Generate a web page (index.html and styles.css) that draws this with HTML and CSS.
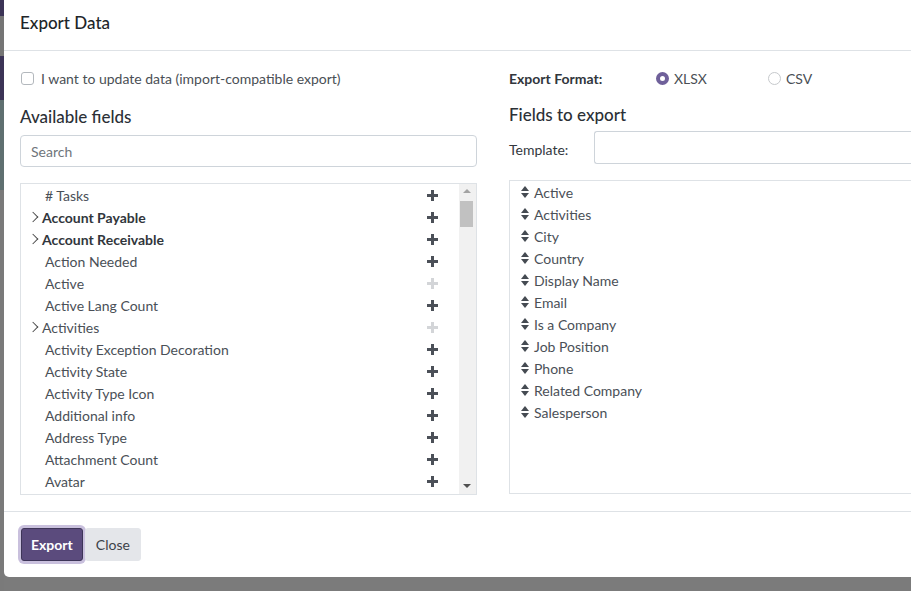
FILE: index.html
```html
<!DOCTYPE html>
<html>
<head>
<meta charset="utf-8">
<link rel="stylesheet" href="styles.css">
</head>
<body>
<div class="backdrop"></div>
<div class="dialog">
  <header class="dlg-header"><h4>Export Data</h4></header>
  <div class="dlg-body">
    <section class="col-left">
      <label class="check-row"><span class="checkbox"></span>I want to update data (import-compatible export)</label>
      <h5 class="col-title">Available fields</h5>
      <div class="search"><span>Search</span></div>
      <div class="field-box">
        <ul class="field-list">
          <li><span class="name">#&nbsp;Tasks</span><span class="plus"></span></li>
          <li class="parent bold"><span class="caret"></span><span class="name">Account Payable</span><span class="plus"></span></li>
          <li class="parent bold"><span class="caret"></span><span class="name">Account Receivable</span><span class="plus"></span></li>
          <li><span class="name">Action Needed</span><span class="plus"></span></li>
          <li><span class="name">Active</span><span class="plus off"></span></li>
          <li><span class="name">Active Lang Count</span><span class="plus"></span></li>
          <li class="parent"><span class="caret"></span><span class="name">Activities</span><span class="plus off"></span></li>
          <li><span class="name">Activity Exception Decoration</span><span class="plus"></span></li>
          <li><span class="name">Activity State</span><span class="plus"></span></li>
          <li><span class="name">Activity Type Icon</span><span class="plus"></span></li>
          <li><span class="name">Additional info</span><span class="plus"></span></li>
          <li><span class="name">Address Type</span><span class="plus"></span></li>
          <li><span class="name">Attachment Count</span><span class="plus"></span></li>
          <li><span class="name">Avatar</span><span class="plus"></span></li>
        </ul>
        <div class="scrollbar">
          <span class="arrow up"></span>
          <span class="thumb"></span>
          <span class="arrow down"></span>
        </div>
      </div>
    </section>
    <section class="col-right">
      <div class="format-row">
        <span class="format-label">Export Format:</span>
        <label class="radio-opt"><span class="radio on"></span>XLSX</label>
        <label class="radio-opt"><span class="radio"></span>CSV</label>
      </div>
      <h5 class="col-title right-title">Fields to export</h5>
      <div class="template-row">
        <span class="template-label">Template:</span>
        <div class="template-input"></div>
      </div>
      <ul class="export-list">
        <li><span class="sort"></span>Active</li>
        <li><span class="sort"></span>Activities</li>
        <li><span class="sort"></span>City</li>
        <li><span class="sort"></span>Country</li>
        <li><span class="sort"></span>Display Name</li>
        <li><span class="sort"></span>Email</li>
        <li><span class="sort"></span>Is a Company</li>
        <li><span class="sort"></span>Job Position</li>
        <li><span class="sort"></span>Phone</li>
        <li><span class="sort"></span>Related Company</li>
        <li><span class="sort"></span>Salesperson</li>
      </ul>
    </section>
  </div>
  <footer class="dlg-footer">
    <button class="btn btn-primary">Export</button>
    <button class="btn btn-secondary">Close</button>
  </footer>
</div>
</body>
</html>
```

FILE: styles.css
```css
* { box-sizing: border-box; }
html, body { margin: 0; padding: 0; }
body {
  width: 911px;
  height: 591px;
  overflow: hidden;
  background: #7b7b7b;
  font-family: "Lato", "Noto Sans", sans-serif;
  font-size: 14px;
  color: #4a5057;
}
.backdrop {
  position: absolute;
  left: 0; top: 0;
  width: 4px; height: 591px;
  background: linear-gradient(#3c3456 0, #3c3456 16px, #757575 16px, #757575 56px, #3c3456 56px, #3c3456 100px, #5f6f70 100px, #5f6f70 190px, #7a7a7a 190px);
}
.dialog {
  margin-left: 4px;
  width: 907px;
  height: 577px;
  background: #fff;
  border-radius: 0 0 0 5px;
  display: flex;
  flex-direction: column;
  overflow: hidden;
}
.dlg-header {
  height: 51px;
  border-bottom: 1px solid #dee2e6;
  padding: 0 16px;
  display: flex;
  align-items: center;
}
.dlg-header h4 {
  margin: 0 0 6px;
  font-size: 17px;
  font-weight: 500;
  color: #212529;
}
.dlg-body {
  display: flex;
  gap: 32px;
  padding: 18px 0 0 16px;
  height: 461px;
  border-bottom: 1px solid #dee2e6;
}
.col-left { width: 457px; flex: none; }
.col-right { flex: 1; min-width: 0; }
.check-row {
  display: flex;
  align-items: center;
  height: 18px;
  margin-left: 1px;
  color: #4a4f55;
}
.checkbox {
  width: 13px; height: 13px;
  border: 1px solid #b3b8bd;
  border-radius: 3px;
  margin-right: 7px;
}
.col-title {
  margin: 19px 0 0;
  font-size: 17px;
  font-weight: 500;
  color: #2b3036;
  height: 21px;
  line-height: 21px;
}
.search {
  margin-top: 8px;
  height: 32px;
  border: 1px solid #ced4da;
  border-radius: 4px;
  padding: 0 10px;
  display: flex;
  align-items: center;
  color: #6f757b;
}
.field-box {
  margin-top: 16px;
  height: 312px;
  border: 1px solid #dee2e6;
  display: flex;
}
.field-list {
  list-style: none;
  margin: 0;
  padding: 0;
  flex: 1;
}
.field-list li {
  height: 22px;
  display: flex;
  align-items: center;
  padding-left: 24px;
  padding-right: 21px;
}
.field-list li.parent { padding-left: 10px; }
.field-list li.bold { font-weight: 700; color: #31363c; }
.caret {
  width: 8px; height: 8px;
  border-right: 1px solid #444;
  border-top: 1px solid #444;
  transform: rotate(45deg) scale(0.95);
  margin: 0 5px 0 -2px;
}
.field-list .name { flex: 1; }
.plus {
  width: 11px; height: 11px;
  position: relative;
}
.plus::before, .plus::after {
  content: "";
  position: absolute;
  background: #4b5058;
}
.plus::before { left: 0; top: 4px; width: 11px; height: 3px; }
.plus::after { left: 4px; top: 0; width: 3px; height: 11px; }
.plus.off::before, .plus.off::after { background: #d3d5d8; }
.scrollbar {
  width: 17px;
  background: #f1f1f1;
  position: relative;
  flex: none;
}
.arrow {
  position: absolute;
  left: 4px;
  width: 0; height: 0;
  border-left: 4px solid transparent;
  border-right: 4px solid transparent;
}
.arrow.up { top: 5px; border-bottom: 4px solid #a3a3a3; }
.arrow.down { bottom: 6px; border-top: 4px solid #505050; }
.thumb {
  position: absolute;
  left: 1px; top: 17px;
  width: 13px; height: 26px;
  background: #c1c1c1;
}
.format-row {
  display: flex;
  align-items: center;
  height: 18px;
}
.format-label {
  font-weight: 700;
  color: #31363c;
  width: 147px;
}
.radio-opt {
  display: flex;
  align-items: center;
  width: 112px;
  color: #4a4f55;
}
.radio {
  width: 13px; height: 13px;
  border-radius: 50%;
  border: 1px solid #c6c9cc;
  margin-right: 5px;
}
.radio.on { border: 4px solid #6f609a; }
.right-title { margin-top: 17px; }
.template-row {
  display: flex;
  align-items: center;
  margin-top: 6px;
}
.template-label {
  width: 85px;
  color: #33383e;
  padding-top: 4px;
}
.template-input {
  flex: 1;
  height: 33px;
  border: 1px solid #ced4da;
  border-right: none;
  border-radius: 3px 0 0 3px;
}
.export-list {
  list-style: none;
  margin: 16px 0 0;
  padding: 0 0 0 11px;
  height: 314px;
  border: 1px solid #dee2e6;
  border-right: none;
}
.export-list li {
  height: 22px;
  display: flex;
  align-items: center;
}
.sort {
  width: 8px; height: 12px;
  position: relative;
  margin-right: 5px;
}
.sort::before, .sort::after {
  content: "";
  position: absolute;
  left: 0;
  border-left: 4px solid transparent;
  border-right: 4px solid transparent;
}
.sort::before { top: 0; border-bottom: 5px solid #454b52; }
.sort::after { bottom: 0; border-top: 5px solid #454b52; }
.dlg-footer {
  display: flex;
  align-items: center;
  padding: 0 16px;
  flex: 1;
}
.btn {
  font-family: inherit;
  font-size: 14px;
  height: 33px;
  border-radius: 3px;
  cursor: pointer;
}
.btn-primary {
  background: #5b4b7d;
  border: 1px solid #3e3558;
  color: #fff;
  font-weight: 700;
  padding: 0 9px;
  box-shadow: 0 0 0 3px #c9c0dd;
  margin-left: 1px;
}
.btn-secondary {
  background: #e4e6ea;
  border: 1px solid #e4e6ea;
  color: #3d4249;
  padding: 0 10px;
  margin-left: 2px;
}
```
